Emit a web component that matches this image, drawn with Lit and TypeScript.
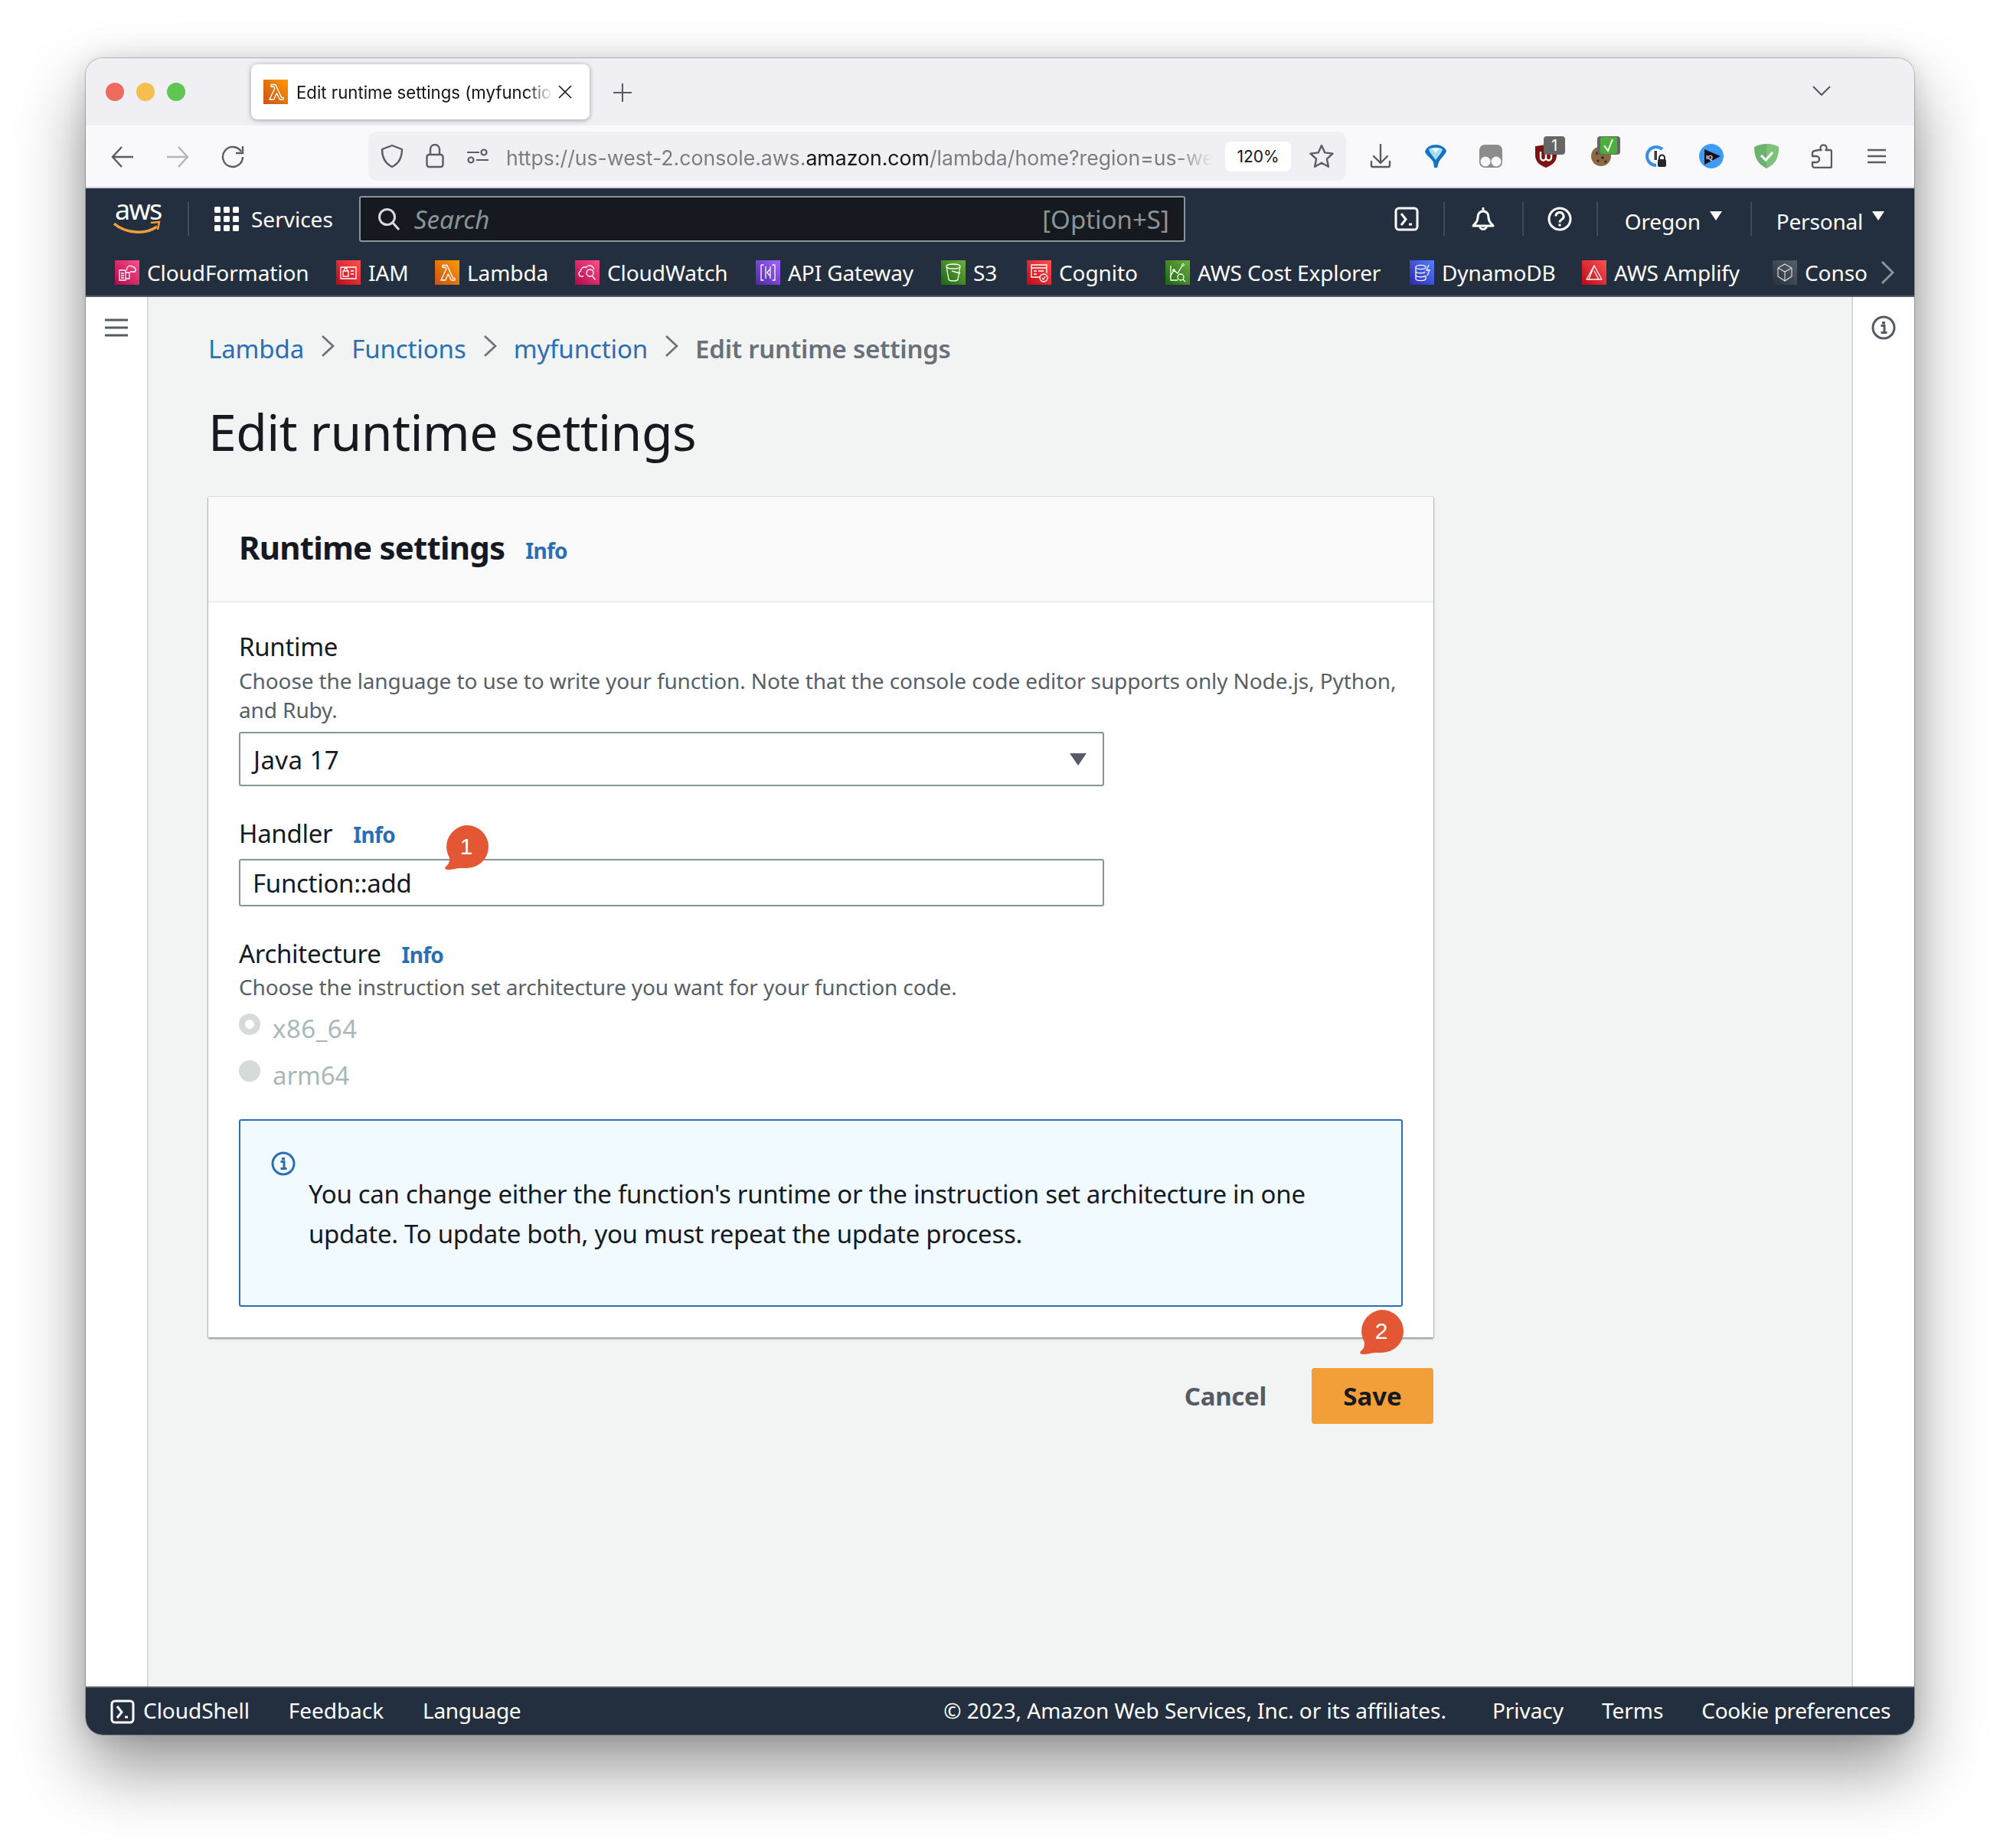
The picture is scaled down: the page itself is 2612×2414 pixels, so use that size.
import { LitElement, html, svg, css } from 'lit';
import { customElement } from 'lit/decorators.js';

const lambdaGlyph = svg`<path d="M9 26h4.600l3.800-8 4 8H26v-2.600h-2.400L15.800 6.500H10v2.800h3.800l1 2.200L8 26z" fill="none" stroke="#fff" stroke-width="1.400" stroke-linejoin="round" />`;

const glyphs: Record<string, unknown> = {
  cf: svg`<path d="M6 13h8v13H6zM8 17h4M8 20h4M8 23h4M14 16h5v8h-5M16 13a3.500 3.500 0 0 1 .500-4 4 4 0 0 1 6.500-.500 3.800 3.800 0 0 1 3 6.500h-6" fill="none" stroke="#fff" stroke-width="1.300" />`,
  iam: svg`<path d="M6 9h20v15H6zM9 14h7v7H9zM10.500 14v-1.500a2 2 0 0 1 4 0V14M19 14h4M19 18h4" fill="none" stroke="#fff" stroke-width="1.300" />`,
  lambda: lambdaGlyph,
  cw: svg`<path d="M11 21H9a3.500 3.500 0 0 1-1.500-6.800 5 5 0 0 1 7-5 5.500 5.500 0 0 1 10 3M15 16.500a4.500 4.500 0 1 0 9 0 4.500 4.500 0 0 0-9 0zM22.500 20.500l4 5" fill="none" stroke="#fff" stroke-width="1.300" />`,
  api: svg`<path d="M7 6v20h3.500M7 6h3.500M25 6v20h-3.500M25 6h-3.500M13 8v16M19 8v16M18 12l-3 4 3 4" fill="none" stroke="#fff" stroke-width="1.300" />`,
  s3: svg`<path d="M7 8c0-4 18-4 18 0s-18 4-18 0zM7 8l3 17c.500 2.500 11.500 2.500 12 0l3-17M14 14l11 3" fill="none" stroke="#fff" stroke-width="1.300" />`,
  cognito: svg`<path d="M17 22H6V6h20v11M6 10h20M9 14h4M9 18h4M15 14h7" fill="none" stroke="#fff" stroke-width="1.300" /><circle cx="22" cy="23" r="5" fill="none" stroke="#fff" stroke-width="1.300" /><path d="M20 23l1.500 2 2.500-4" fill="none" stroke="#fff" stroke-width="1.300" />`,
  cost: svg`<path d="M7 7v19h9M6 22l5-9 5 4 6-10" fill="none" stroke="#fff" stroke-width="1.300" /><circle cx="11" cy="13" r="1.500" fill="none" stroke="#fff" /><circle cx="23" cy="6" r="1.500" fill="none" stroke="#fff" /><circle cx="20" cy="22" r="4" fill="none" stroke="#fff" stroke-width="1.300" /><path d="M23 25l3 3" stroke="#fff" stroke-width="1.300" />`,
  ddb: svg`<path d="M8 9c0-3.500 13-3.500 13 0s-13 3.500-13 0zM8 9v15c0 3.500 13 3.500 13 0V20M8 14c0 3.500 11 3.500 12 1M8 19c0 3.500 11 3.500 12 1M25 6l-3 7h4l-3 7" fill="none" stroke="#fff" stroke-width="1.300" />`,
  amplify: svg`<path d="M16 7l10 18H6zM16 7L9 25M16 14l6 11H13" fill="none" stroke="#fff" stroke-width="1.300" stroke-linejoin="round" />`,
  console: svg`<path d="M16 5l9 5v11l-9 6-9-6V10zM7 10l9 5 9-5M16 15v12" fill="none" stroke="#dfe3e6" stroke-width="1.100" />`,
};

const shortcuts = [
  { name: 'CloudFormation', icon: 'cf', from: '#b0084d', to: '#ff4f8b' },
  { name: 'IAM', icon: 'iam', from: '#bd0816', to: '#ff5252' },
  { name: 'Lambda', icon: 'lambda', from: '#c8511b', to: '#ff9900' },
  { name: 'CloudWatch', icon: 'cw', from: '#b0084d', to: '#ff4f8b' },
  { name: 'API Gateway', icon: 'api', from: '#4d27a8', to: '#a166ff' },
  { name: 'S3', icon: 's3', from: '#1b660f', to: '#6cae3e' },
  { name: 'Cognito', icon: 'cognito', from: '#bd0816', to: '#ff5252' },
  { name: 'AWS Cost Explorer', icon: 'cost', from: '#1b660f', to: '#6cae3e' },
  { name: 'DynamoDB', icon: 'ddb', from: '#2e27ad', to: '#527fff' },
  { name: 'AWS Amplify', icon: 'amplify', from: '#bd0816', to: '#ff5252' },
  { name: 'Conso', icon: 'console', from: '#2b303b', to: '#55606c' },
];

const serviceIcon = (icon: string, from: string, to: string) => html`
  <svg class="svc" viewBox="0 0 32 32">
    <defs>
      <linearGradient id="g-${icon}" x1="0" y1="1" x2="1" y2="0">
        <stop offset="0" stop-color=${from} />
        <stop offset="1" stop-color=${to} />
      </linearGradient>
    </defs>
    <rect width="32" height="32" fill="url(#g-${icon})" />
    ${glyphs[icon]}
  </svg>
`;

const terminal = html`<svg class="i32" viewBox="0 0 32 32" fill="none" stroke="#fff" stroke-width="3">
  <rect x="2" y="2" width="28" height="28" rx="4" />
  <path d="M9 9l6 7.500-6 7.500M19 23h4" />
</svg>`;

const infoCircle = (color: string) => html`<svg class="i32" viewBox="0 0 32 32" fill="none">
  <circle cx="16" cy="16" r="14" stroke=${color} stroke-width="3" />
  <path d="M12.500 13.500H17V22M12.500 22.500h8" stroke=${color} stroke-width="3" />
  <rect x="14" y="8" width="4" height="3.500" fill=${color} />
</svg>`;

const chevron = html`<svg class="crumb-sep" viewBox="0 0 18 32" fill="none" stroke="#687078" stroke-width="2.600">
  <path d="M2 3l14 13L2 29" />
</svg>`;

const callout = html`<svg viewBox="0 0 60 60">
  <path d="M31 2a28 28 0 1 1 0 56c-7 0-11-.500-15 .800-3 1-10 1.700-12.500 1-2-.800-1.500-3 1-5 2.500-2 4-5 3.300-11A28 28 0 0 1 31 2z" fill="#e35735" />
</svg>`;

@customElement('app-root')
export class AppRoot extends LitElement {
  static styles = css`
    :host {
      display: block;
      width: 2612px;
      height: 2414px;
      background: #fff;
      overflow: hidden;
      position: relative;
      font-family: 'Noto Sans', sans-serif;
      color: #16191f;
    }

    .desktop {
      padding: 76px 112px;
    }

    .window {
      height: 2190px;
      border-radius: 22px;
      overflow: hidden;
      display: flex;
      flex-direction: column;
      box-shadow: 0 44px 90px rgba(0, 0, 0, 0.42), 0 0 30px rgba(0, 0, 0, 0.12), 0 0 0 1px rgba(0, 0, 0, 0.22);
      background: #f2f3f3;
    }

    /* firefox chrome */
    .tabstrip {
      height: 88px;
      flex: none;
      background: #f0f0f4;
      display: flex;
      align-items: flex-start;
      padding-left: 26px;
      font-family: Inter, sans-serif;
    }

    .lights {
      display: flex;
      gap: 16px;
      margin-top: 32px;
    }

    .lights span {
      width: 24px;
      height: 24px;
      border-radius: 50%;
    }

    .tab {
      margin: 8px 0 0 86px;
      width: 442px;
      height: 72px;
      box-sizing: border-box;
      background: #fff;
      border-radius: 8px;
      box-shadow: 0 1px 6px rgba(0, 0, 0, 0.35);
      display: flex;
      align-items: center;
      padding-left: 16px;
    }

    .tab .svc {
      margin-right: 11px;
    }

    .tab-title {
      width: 335px;
      font-size: 22.200px;
      line-height: 34px;
      padding-top: 2px;
      white-space: nowrap;
      overflow: hidden;
      color: #15141a;
      -webkit-mask-image: linear-gradient(90deg, #000 90%, transparent);
      mask-image: linear-gradient(90deg, #000 90%, transparent);
    }

    .tab-close {
      width: 18px;
      height: 18px;
      margin-left: 7px;
    }

    .plus {
      width: 24px;
      height: 24px;
      margin: 33px 0 0 31px;
    }

    .tabs-menu {
      width: 24px;
      height: 14px;
      margin: 36px 0 0 1542px;
    }

    .toolbar {
      height: 80px;
      flex: none;
      background: #f9f9fb;
      border-bottom: 2px solid #d4d4d8;
      display: flex;
      align-items: center;
      padding-left: 12px;
      font-family: Inter, sans-serif;
    }

    .slot {
      width: 72px;
      height: 64px;
      flex: none;
      display: flex;
      align-items: center;
      justify-content: center;
      position: relative;
    }

    .slot.low {
      margin-top: 2px;
    }

    .urlbar {
      width: 1277px;
      height: 64px;
      margin: 0 9px 0 141px;
      flex: none;
      box-sizing: border-box;
      padding-left: 3px;
      background: #f0f0f4;
      border-radius: 10px;
      display: flex;
      align-items: center;
    }

    .urlbar .slot {
      width: 56px;
    }

    .url {
      width: 923px;
      margin: 0 16px 0 9px;
      padding-top: 3px;
      flex: none;
      font-size: 26.650px;
      line-height: 40px;
      white-space: nowrap;
      overflow: hidden;
      color: #7c7c83;
      -webkit-mask-image: linear-gradient(90deg, #000 95%, transparent);
      mask-image: linear-gradient(90deg, #000 95%, transparent);
    }

    .url b {
      font-weight: 400;
      color: #15141a;
    }

    .zoom {
      width: 86px;
      height: 39px;
      flex: none;
      display: flex;
      align-items: center;
      justify-content: center;
      background: #fff;
      border-radius: 8px;
      font-size: 21px;
      color: #15141a;
    }

    .urlbar .star {
      width: 66px;
      margin-left: 7px;
    }

    .ext-badge {
      position: absolute;
      top: 6px;
      right: 11px;
      width: 28px;
      height: 24px;
      background: #666;
      border-radius: 4px;
      color: #fff;
      font-size: 20px;
      line-height: 24px;
      text-align: center;
    }

    .ext-badge.check {
      width: 30px;
    }

    .ext-badge.check svg {
      display: block;
      margin: 1px 4px;
    }

    /* aws header */
    .nav {
      flex: none;
      background: #232f3e;
      border-bottom: 2px solid #545b64;
      color: #fff;
    }

    .nav-top {
      height: 80px;
      display: flex;
      align-items: center;
      padding-left: 38px;
    }

    .logo {
      position: relative;
      width: 60px;
      height: 40px;
      flex: none;
    }

    .logo-text {
      display: block;
      font-size: 36px;
      line-height: 34px;
      letter-spacing: -1.800px;
      margin: -9px 0 0 0;
    }

    .logo svg {
      position: absolute;
      left: -2px;
      bottom: -1px;
      width: 62px;
      height: 19px;
    }

    .vr {
      width: 2px;
      height: 44px;
      flex: none;
      background: #414b58;
    }

    .grid-icon {
      width: 32px;
      height: 32px;
      flex: none;
    }

    .services {
      font-size: 28px;
      margin-left: 16px;
    }

    .search {
      width: 1079px;
      height: 60px;
      box-sizing: border-box;
      flex: none;
      margin-left: 34px;
      background: #16191f;
      border: 2px solid #879596;
      border-radius: 3px;
      display: flex;
      align-items: center;
      padding: 0 19px 0 22px;
      color: #879596;
      font-size: 33px;
    }

    .search svg {
      width: 30px;
      height: 30px;
      flex: none;
      margin-right: 18px;
    }

    .search i {
      flex: 1;
    }

    .i32 {
      width: 32px;
      height: 32px;
      flex: none;
      display: block;
    }

    .region {
      font-size: 28px;
      display: flex;
      align-items: center;
      padding-top: 6px;
      flex: none;
      letter-spacing: -0.2px;
    }

    .caret {
      width: 16px;
      height: 12px;
      flex: none;
      margin: -14px 0 0 12px;
    }

    .shortcuts {
      height: 60px;
      display: grid;
      grid-template-columns: 289px 129px 183px 236px 242px 112px 181px 319px 225px 249px 141px 18px;
      margin-left: 38px;
      align-items: center;
      font-size: 28px;
      letter-spacing: -0.1px;
    }

    .shortcut {
      display: flex;
      align-items: center;
      gap: 10px;
      white-space: nowrap;
    }

    .svc {
      width: 32px;
      height: 32px;
      flex: none;
      display: block;
    }

    .more {
      width: 18px;
      height: 30px;
      display: block;
    }

    /* page */
    .page {
      flex: 1;
      min-height: 0;
      display: flex;
    }

    .rail {
      flex: none;
      background: #fff;
      padding-top: 28px;
      display: flex;
      justify-content: center;
      box-sizing: border-box;
    }

    .rail.left {
      width: 82px;
      border-right: 2px solid #d5dbdb;
    }

    .rail.right {
      width: 82px;
      border-left: 2px solid #d5dbdb;
    }

    .rail.right svg {
      margin: -4px 0 0 0;
    }

    .main {
      flex: 1;
      padding: 47px 0 0 78px;
    }

    .crumbs {
      display: flex;
      align-items: center;
      height: 40px;
      gap: 22px;
      font-size: 33px;
      color: #2a6eb4;
      letter-spacing: -0.1px;
    }

    .crumbs .here {
      color: #687078;
      font-weight: 600;
      letter-spacing: -0.25px;
    }

    .crumb-sep {
      width: 18px;
      height: 32px;
      flex: none;
      margin-top: -6px;
    }

    h1 {
      margin: 48px 0 46px;
      font-size: 66px;
      line-height: 80px;
      font-weight: 400;
      letter-spacing: -0.5px;
    }

    .content {
      width: 1600px;
    }

    .card {
      background: #fff;
      box-shadow: 0 2px 2px rgba(0, 28, 36, 0.4), 1px 0 1px rgba(0, 28, 36, 0.15), -1px 0 1px rgba(0, 28, 36, 0.15), 0 -1px 1px rgba(0, 28, 36, 0.05);
    }

    .card-head {
      height: 136px;
      background: #fafafa;
      border-bottom: 2px solid #eaeded;
      padding-left: 40px;
      display: flex;
      align-items: center;
    }

    h2 {
      margin: -6px 27px 0 0;
      font-size: 42px;
      font-weight: 700;
      letter-spacing: -0.8px;
    }

    .info {
      color: #2a6eb4;
      font-size: 28px;
      font-weight: 700;
      letter-spacing: -0.7px;
    }

    .card-head .info {
      margin-top: 4px;
    }

    .card-body {
      padding: 38px 40px 40px;
    }

    .label {
      display: flex;
      align-items: center;
      height: 38px;
      font-size: 33px;
      letter-spacing: -0.3px;
    }

    .label .info {
      margin: 4px 0 0 27px;
    }

    .hint {
      font-size: 28px;
      line-height: 37.500px;
      color: #566069;
      margin: 8px 0 10px;
      white-space: nowrap;
      letter-spacing: -0.11px;
    }

    .select,
    .input {
      width: 1130px;
      box-sizing: border-box;
      border: 2px solid #879596;
      border-radius: 3px;
      background: #fff;
      display: flex;
      align-items: center;
      padding-left: 16px;
      font-size: 33px;
      letter-spacing: -0.3px;
    }

    .select {
      height: 71px;
      justify-content: space-between;
      padding: 2px 20px 0 17px;
      margin-bottom: 42px;
      letter-spacing: 0.4px;
    }

    .select svg {
      width: 24px;
      height: 18px;
      margin-top: -2px;
    }

    .input {
      height: 62px;
      margin: 15px 0 42px;
    }

    .hint.arch {
      margin: 7px 0 15px;
    }

    .radios {
      display: grid;
      gap: 21px;
      margin-bottom: 37px;
    }

    .radio {
      height: 40px;
      display: flex;
      align-items: flex-start;
      gap: 16px;
      color: #aab7b8;
      font-size: 33px;
      line-height: 40px;
      letter-spacing: -0.1px;
    }

    .radio.selected {
      letter-spacing: 0.5px;
    }

    .dot {
      width: 28px;
      height: 28px;
      border-radius: 50%;
      box-sizing: border-box;
      background: #d5dbdb;
      flex: none;
    }

    .dot.on {
      border: 8px solid #d5dbdb;
      background: #fff;
    }

    .alert {
      width: 1520px;
      height: 245px;
      box-sizing: border-box;
      border: 2px solid #2a6eb4;
      border-radius: 3px;
      background: #f1faff;
      padding: 40px 0 0 40px;
    }

    .alert-text {
      margin: -2px 0 0 49px;
      font-size: 33px;
      line-height: 52px;
      white-space: nowrap;
      letter-spacing: -0.3px;
    }

    .actions {
      display: flex;
      justify-content: flex-end;
      align-items: center;
      gap: 59px;
      margin-top: 40px;
    }

    .cancel {
      color: #545b64;
      font-size: 33px;
      font-weight: 700;
      letter-spacing: -0.3px;
    }

    .save {
      width: 159px;
      height: 73px;
      display: flex;
      align-items: center;
      justify-content: center;
      background: #f29f39;
      border-radius: 4px;
      font-size: 33px;
      font-weight: 700;
    }

    .callout {
      position: absolute;
      width: 60px;
      height: 60px;
      color: #fff;
      font-family: 'Liberation Sans', sans-serif;
      font-size: 30px;
    }

    .callout svg {
      position: absolute;
      inset: 0;
    }

    .callout span {
      position: absolute;
      left: 0;
      right: 0;
      top: 12px;
      line-height: 36px;
      text-align: center;
    }

    .callout.one {
      left: 579px;
      top: 1076px;
    }

    .callout.two {
      left: 1774px;
      top: 1709px;
    }

    /* footer */
    .footer {
      height: 63px;
      box-sizing: border-box;
      flex: none;
      border-top: 2px solid #545b64;
      background: #232f3e;
      color: #fff;
      display: flex;
      align-items: center;
      font-size: 28px;
      padding: 0 31px 3px 32px;
      letter-spacing: -0.05px;
    }

    .footer .i32 {
      margin: 3px 11px 0 0;
    }

    .footer span {
      margin-right: 51px;
      white-space: nowrap;
    }

    .footer .narrow {
      letter-spacing: -0.35px;
    }

    .footer .copy {
      margin-left: auto;
      margin-right: 60px;
    }

    .footer span.tight {
      margin-right: 50px;
    }

    .footer span:last-child {
      margin-right: 0;
    }
  `;

  private renderToolbarIcons() {
    return html`
      <div class="slot">
        <svg width="30" height="32" viewBox="0 0 30 32" fill="none" stroke="#5b5b66" stroke-width="2.400" stroke-linecap="round" stroke-linejoin="round"><path d="M15 1v24M6 16l9 9 9-9" /><path d="M3 23v5a2 2 0 0 0 2 2h20a2 2 0 0 0 2-2v-5" /></svg>
      </div>
      <div class="slot">
        <svg width="28" height="30" viewBox="0 0 28 30">
          <path d="M0 9C2 3 8 0 14 0s12 3 14 8c-1 5-8 10-10 15l-2 7h-4l-1-7C9 18 1 14 0 9z" fill="#1473c4" />
          <path d="M5 6c3-3 15-3 18 0-1 5-6 9-9 14C11 15 6 11 5 6z" fill="#a9dcf7" />
          <path d="M9 5c3-1 7-1 10 0l-5 6z" fill="#eaf7fd" />
        </svg>
      </div>
      <div class="slot">
        <svg width="30" height="30" viewBox="0 0 30 30">
          <rect width="30" height="30" rx="7" fill="#8c8c8c" />
          <circle cx="8" cy="22" r="6.500" fill="#f9f9fb" />
          <circle cx="22" cy="22" r="6.500" fill="#f9f9fb" />
        </svg>
      </div>
      <div class="slot">
        <svg width="28" height="30" viewBox="0 0 28 30">
          <path d="M0 2l14-2 14 2v12c0 8-6 13-14 16C6 27 0 22 0 14z" fill="#7b1410" />
          <path d="M7 9v8a3 3 0 0 0 7 0v-6 6a3 3 0 0 0 7 0V9" fill="none" stroke="#fff" stroke-width="2.400" />
        </svg>
        <span class="ext-badge">1</span>
      </div>
      <div class="slot">
        <svg width="26" height="26" viewBox="0 0 26 26">
          <circle cx="13" cy="13" r="13" fill="#8a6a42" />
          <circle cx="8" cy="9" r="1.800" fill="#33220f" />
          <circle cx="15" cy="15" r="1.800" fill="#33220f" />
          <circle cx="9" cy="19" r="1.500" fill="#33220f" />
          <circle cx="19" cy="20" r="1.500" fill="#33220f" />
          <circle cx="17" cy="7" r="1.300" fill="#33220f" />
        </svg>
        <span class="ext-badge check">
          <svg width="22" height="22" viewBox="0 0 22 22"><rect width="22" height="22" rx="3" fill="#4caf3c" /><path d="M5 11l5 7 6-15" fill="none" stroke="#fff" stroke-width="2" /></svg>
        </span>
      </div>
      <div class="slot">
        <svg width="28" height="28" viewBox="0 0 28 28">
          <path d="M14 2a12 12 0 1 0 0 24" fill="none" stroke="#3b8ee8" stroke-width="4" />
          <path d="M14 2a12 12 0 0 1 8 3" fill="none" stroke="#3b8ee8" stroke-width="4" />
          <rect x="11.500" y="7" width="3.500" height="12" fill="#3d3d46" />
          <path d="M18 19v-3a3.500 3.500 0 0 1 7 0v3" fill="none" stroke="#26262b" stroke-width="2" />
          <rect x="16" y="18" width="11" height="10" rx="2" fill="#26262b" />
        </svg>
      </div>
      <div class="slot">
        <svg width="32" height="32" viewBox="0 0 32 32">
          <circle cx="16" cy="16" r="16" fill="#3f9bfa" />
          <path d="M7 7l21 9-21 11z" fill="#111418" />
          <text x="13.500" y="19.500" font-size="8" font-weight="700" font-family="Liberation Sans" text-anchor="middle" fill="#fff">IQ</text>
        </svg>
      </div>
      <div class="slot">
        <svg width="32" height="32" viewBox="0 0 32 32">
          <path d="M16 0c6 0 11 1.500 16 4 0 13-4 22-16 28C4 26 0 17 0 4c5-2.500 10-4 16-4z" fill="#6eb26f" />
          <path d="M16 0c6 0 11 1.500 16 4 0 13-4 22-16 28z" fill="#7ec37c" />
          <path d="M9 15l6 6 9-10" fill="none" stroke="#fff" stroke-width="3" />
        </svg>
      </div>
      <div class="slot">
        <svg width="28" height="32" viewBox="0 0 28 32" fill="none" stroke="#5b5b66" stroke-width="2.400" stroke-linejoin="round"><path d="M10 8h3.500a4 4 0 1 1 6 0H25a2 2 0 0 1 2 2v19a2 2 0 0 1-2 2H5a3 3 0 0 1-3-3v-4h5a4 4 0 0 0 0-8H2v-4a3 3 0 0 1 3-3z" /></svg>
      </div>
      <div class="slot">
        <svg width="24" height="20" viewBox="0 0 24 20" stroke="#5b5b66" stroke-width="2.400"><path d="M0 2h24M0 10h24M0 18h24" /></svg>
      </div>
    `;
  }

  render() {
    return html`
      <div class="desktop">
        <div class="window">
          <div class="tabstrip">
            <div class="lights">
              <span style="background:#ed6a5e"></span>
              <span style="background:#f5bf4f"></span>
              <span style="background:#61c554"></span>
            </div>
            <div class="tab">
              ${serviceIcon('lambda', '#c8511b', '#ff9900')}
              <span class="tab-title">Edit runtime settings (myfunction) | Lambda</span>
              <svg class="tab-close" viewBox="0 0 18 18" stroke="#15141a" stroke-width="1.600"><path d="M1 1l16 16M17 1L1 17" /></svg>
            </div>
            <svg class="plus" viewBox="0 0 24 24" stroke="#5b5b66" stroke-width="2"><path d="M12 0v24M0 12h24" /></svg>
            <svg class="tabs-menu" viewBox="0 0 24 14" fill="none" stroke="#5b5b66" stroke-width="2.200"><path d="M1 1l11 11L23 1" /></svg>
          </div>

          <div class="toolbar">
            <div class="slot low">
              <svg width="30" height="28" viewBox="0 0 30 28" fill="none" stroke="#5b5b66" stroke-width="2.400"><path d="M29 14H2M14 1L2 14l12 13" /></svg>
            </div>
            <div class="slot low">
              <svg width="30" height="28" viewBox="0 0 30 28" fill="none" stroke="#b4b4b9" stroke-width="2.400"><path d="M1 14h27M16 1l12 13-12 13" /></svg>
            </div>
            <div class="slot low">
              <svg width="30" height="30" viewBox="0 0 30 30" fill="none" stroke="#5b5b66" stroke-width="2.400"><path d="M26 8A13 13 0 1 0 28 15" /><path d="M28 1v9h-9" /></svg>
            </div>
            <div class="urlbar">
              <div class="slot">
                <svg width="30" height="32" viewBox="0 0 30 32" fill="none" stroke="#5b5b66" stroke-width="2.400" stroke-linejoin="round"><path d="M15 2L2 7c0 10 3 18 13 23 10-5 13-13 13-23z" /></svg>
              </div>
              <div class="slot">
                <svg width="24" height="32" viewBox="0 0 24 32" fill="none" stroke="#5b5b66" stroke-width="2.400"><rect x="1.500" y="14" width="21" height="16" rx="3" /><path d="M6 14V7a6 6 0 0 1 12 0v7" /></svg>
              </div>
              <div class="slot">
                <svg width="28" height="20" viewBox="0 0 28 20" fill="none" stroke="#5b5b66" stroke-width="2.200"><path d="M0 5h16M12 15h16" /><circle cx="22" cy="5" r="3.500" /><circle cx="5" cy="15" r="3.500" /></svg>
              </div>
              <div class="url">https://us-west-2.console.aws.<b>amazon.com</b>/lambda/home?region=us-west-2#/functions</div>
              <div class="zoom">120%</div>
              <div class="slot star">
                <svg width="32" height="32" viewBox="0 0 32 32" fill="none" stroke="#5b5b66" stroke-width="2.400" stroke-linejoin="round"><path d="M16 2l4.300 9.400 10.200 1.200-7.600 7 2 10.200L16 24.700 7.100 29.800l2-10.200-7.600-7 10.200-1.200z" /></svg>
              </div>
            </div>
            ${this.renderToolbarIcons()}
          </div>

          <div class="nav">
            <div class="nav-top">
              <div class="logo">
                <span class="logo-text">aws</span>
                <svg viewBox="0 0 62 19" fill="none"><path d="M1 4c15 13 41 15 56 4" stroke="#f29d38" stroke-width="3.500" /><path d="M49 3l11-1-2 10" stroke="#f29d38" stroke-width="2.500" /></svg>
              </div>
              <div class="vr" style="margin-left:35px"></div>
              <svg class="grid-icon" style="margin-left:33px" viewBox="0 0 32 32" fill="#fff">
                ${[0, 12, 24].map(y => [0, 12, 24].map(x => svg`<rect x=${x} y=${y} width="8" height="8" rx="1.500" />`))}
              </svg>
              <span class="services">Services</span>
              <div class="search">
                <svg viewBox="0 0 30 30" fill="none" stroke="#d5dbdb" stroke-width="3"><circle cx="12.500" cy="12.500" r="10" /><path d="M20 20l8 9" /></svg>
                <i>Search</i>
                <span>[Option+S]</span>
              </div>
              <div style="margin-left:273px">${terminal}</div>
              <div class="vr" style="margin-left:32px"></div>
              <svg class="i32" style="margin-left:34px" viewBox="0 0 32 32" fill="none" stroke="#fff" stroke-width="3"><path d="M16 1v5M16 6c-5 0-7 4-7 8 0 6-3 7-6 11h26c-3-4-6-5-6-11 0-4-2-8-7-8z" stroke-linejoin="round" /><path d="M11.500 25a4.500 4.500 0 0 0 9 0" /></svg>
              <div class="vr" style="margin-left:35px"></div>
              <svg class="i32" style="margin-left:31px" viewBox="0 0 32 32" fill="none" stroke="#fff" stroke-width="3"><circle cx="16" cy="16" r="14" /><path d="M11 12.500a5 5 0 1 1 7.500 4.300c-1.500 1-2.500 1.500-2.500 3.700" /><path d="M16 22.500v3" /></svg>
              <div class="vr" style="margin-left:32px"></div>
              <div class="region" style="margin-left:35px">Oregon<svg class="caret" viewBox="0 0 16 12" fill="#fff"><path d="M0 0h16L8 12z" /></svg></div>
              <div class="vr" style="margin-left:37px"></div>
              <div class="region" style="margin-left:32px">Personal<svg class="caret" viewBox="0 0 16 12" fill="#fff"><path d="M0 0h16L8 12z" /></svg></div>
            </div>
            <div class="shortcuts">
              ${shortcuts.map(s => html`
                <div class="shortcut">
                  ${serviceIcon(s.icon, s.from, s.to)}
                  <span>${s.name}</span>
                </div>
              `)}
              <svg class="more" viewBox="0 0 18 30" fill="none" stroke="#879596" stroke-width="3"><path d="M2 1l14 14L2 29" /></svg>
            </div>
          </div>

          <div class="page">
            <div class="rail left">
              <svg width="30" height="24" viewBox="0 0 30 24" stroke="#545b64" stroke-width="3"><path d="M0 2h30M0 12h30M0 22h30" /></svg>
            </div>
            <div class="main">
              <div class="crumbs">
                <span>Lambda</span>${chevron}
                <span>Functions</span>${chevron}
                <span>myfunction</span>${chevron}
                <span class="here">Edit runtime settings</span>
              </div>
              <h1>Edit runtime settings</h1>
              <div class="content">
                <div class="card">
                  <div class="card-head">
                    <h2>Runtime settings</h2>
                    <span class="info">Info</span>
                  </div>
                  <div class="card-body">
                    <div class="label">Runtime</div>
                    <div class="hint">Choose the language to use to write your function. Note that the console code editor supports only Node.js, Python,<br />and Ruby.</div>
                    <div class="select">
                      Java 17
                      <svg viewBox="0 0 24 18" fill="#545b64"><path d="M1 1h22L12 17z" /></svg>
                    </div>
                    <div class="label">Handler <span class="info">Info</span></div>
                    <div class="input">Function::add</div>
                    <div class="label">Architecture <span class="info">Info</span></div>
                    <div class="hint arch">Choose the instruction set architecture you want for your function code.</div>
                    <div class="radios">
                      <div class="radio selected"><span class="dot on"></span>x86_64</div>
                      <div class="radio"><span class="dot"></span>arm64</div>
                    </div>
                    <div class="alert">
                      ${infoCircle('#2a6eb4')}
                      <div class="alert-text">You can change either the function's runtime or the instruction set architecture in one<br />update. To update both, you must repeat the update process.</div>
                    </div>
                  </div>
                </div>
                <div class="actions">
                  <span class="cancel">Cancel</span>
                  <span class="save">Save</span>
                </div>
              </div>
            </div>
            <div class="rail right">${infoCircle('#545b64')}</div>
          </div>

          <div class="footer">
            ${terminal}
            <span>CloudShell</span>
            <span>Feedback</span>
            <span class="narrow">Language</span>
            <span class="copy">© 2023, Amazon Web Services, Inc. or its affiliates.</span>
            <span class="tight">Privacy</span>
            <span class="tight">Terms</span>
            <span class="narrow">Cookie preferences</span>
          </div>
        </div>
      </div>
      <div class="callout one">${callout}<span>1</span></div>
      <div class="callout two">${callout}<span>2</span></div>
    `;
  }
}
